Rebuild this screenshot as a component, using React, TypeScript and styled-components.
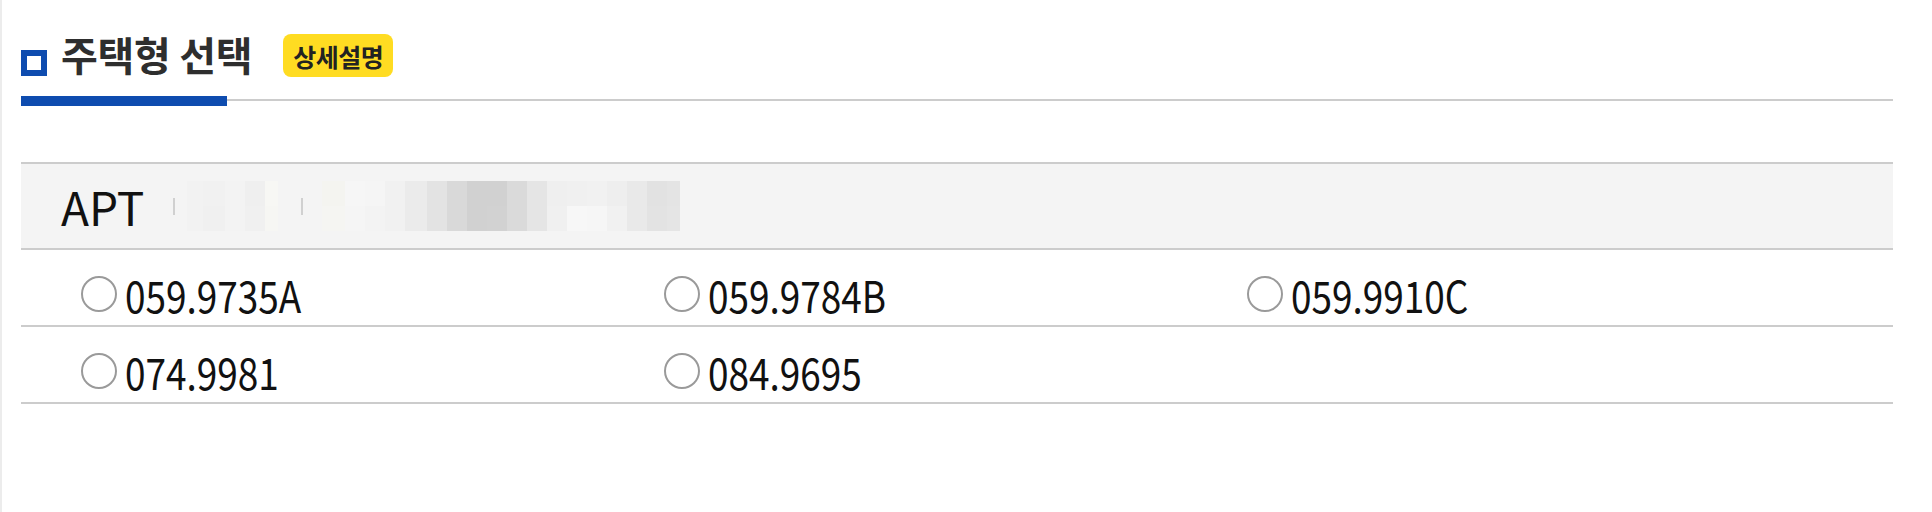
import { createGlobalStyle } from "styled-components";
import styled from "styled-components";

const GlobalStyle = createGlobalStyle`
  html, body {
    margin: 0;
    padding: 0;
    background: #fff;
  }
  body {
    font-family: "Noto Sans CJK KR", "Noto Sans", sans-serif;
  }
`;

const Page = styled.div`
  min-height: 512px;
  border-left: 2px solid #ececec;
  padding: 0 39px 0 19px;
  box-sizing: border-box;
`;

const Heading = styled.div`
  position: relative;
  display: flex;
  align-items: flex-start;
  height: 69px;
  padding-top: 30px;
  border-bottom: 2px solid #cccccc;

  &::after {
    content: "";
    position: absolute;
    left: 0;
    bottom: -7px;
    width: 206px;
    height: 10px;
    background: #0e4caf;
  }
`;

const Square = styled.span`
  flex-shrink: 0;
  width: 14px;
  height: 14px;
  border: 6px solid #0e4caf;
  margin-top: 20px;
  background: #fff;
`;

const Title = styled.h2`
  margin: 0 0 0 14px;
  font-family: "Noto Sans CJK KR", sans-serif;
  font-size: 40px;
  line-height: 48px;
  font-weight: 700;
  color: #2e2e2e;
  letter-spacing: -0.3px;
`;

const Badge = styled.span`
  flex-shrink: 0;
  margin: 4px 0 0 31px;
  width: 110px;
  height: 43px;
  display: inline-flex;
  align-items: center;
  justify-content: center;
  border-radius: 8px;
  background: #ffdc22;
  font-family: "Noto Sans CJK KR", sans-serif;
  font-size: 25px;
  font-weight: 700;
  color: #222;
  letter-spacing: -0.5px;
`;

const Table = styled.div`
  margin-top: 61px;
  border-top: 2px solid #cccccc;
`;

const TypeHeader = styled.div`
  display: flex;
  align-items: center;
  height: 84px;
  padding-left: 40px;
  background: #f4f4f4;
  border-bottom: 2px solid #cccccc;
`;

const TypeName = styled.span`
  font-family: "Noto Sans CJK KR", sans-serif;
  font-size: 46px;
  line-height: 1;
  color: #111;
`;

const Divider = styled.span<{ $lead: number; $gap: number }>`
  flex-shrink: 0;
  width: 2px;
  height: 17px;
  background: #d0d0d0;
  margin: 0 ${(p) => p.$gap}px 0 ${(p) => p.$lead}px;
`;

const Mosaic = styled.div<{ $rows: number }>`
  display: grid;
  grid-auto-flow: column;
  grid-template-rows: repeat(${(p) => p.$rows}, 25px);
`;

const Cell = styled.span<{ $tone: string; $w: number }>`
  width: ${(p) => p.$w}px;
  background: ${(p) => p.$tone};
`;

const OptionRow = styled.div`
  display: grid;
  grid-template-columns: repeat(3, 583px);
  align-items: center;
  height: 77px;
  padding-left: 60px;
  padding-top: 12px;
  border-bottom: 2px solid #cccccc;
  box-sizing: border-box;
`;

const Option = styled.label`
  display: flex;
  align-items: center;
  gap: 8px;
  cursor: pointer;
`;

const Radio = styled.input`
  flex-shrink: 0;
  appearance: none;
  margin: 0;
  width: 36px;
  height: 36px;
  border-radius: 50%;
  border: 2px solid #9a9a9a;
  background: #fff;
  box-sizing: border-box;
`;

const OptionText = styled.span`
  display: inline-block;
  font-family: "Noto Sans CJK KR", sans-serif;
  font-size: 44px;
  line-height: 1;
  color: #111;
  transform: scaleX(0.84);
  transform-origin: left center;
`;

const mosaicA = [
  ["#f2f2f2", "#f2f2f2", 16],
  ["#f1f1f1", "#f0f0f0", 22],
  ["#f3f3f3", "#f3f3f3", 20],
  ["#efefef", "#f0f0f0", 20],
  ["#f7f7f4", "#f6f6f3", 13],
] as const;

const mosaicB = [
  ["#f4f4f0", "#f5f5f2", 23],
  ["#f6f6f6", "#f5f5f5", 20],
  ["#f5f5f5", "#f3f3f3", 20],
  ["#f1f1f1", "#f1f1f1", 20],
  ["#ebebeb", "#ebebeb", 22],
  ["#e3e3e3", "#e3e3e3", 20],
  ["#d9d9d9", "#d9d9d9", 20],
  ["#d1d1d1", "#d1d1d1", 20],
  ["#d1d1d1", "#d2d2d2", 20],
  ["#dadada", "#dadada", 20],
  ["#e5e5e5", "#e5e5e5", 20],
  ["#efefef", "#f0f0f0", 20],
  ["#f0f0f0", "#f7f7f7", 20],
  ["#f1f1f1", "#f6f6f6", 20],
  ["#eeeeee", "#f1f1f1", 20],
  ["#e9e9e9", "#e9e9e9", 20],
  ["#e2e2e2", "#e3e3e3", 20],
  ["#e4e4e4", "#e5e5e5", 13],
] as const;

const rows = [
  ["059.9735A", "059.9784B", "059.9910C"],
  ["074.9981", "084.9695"],
];

function Blur({ cells }: { cells: readonly (readonly [string, string, number])[] }) {
  return (
    <Mosaic $rows={2}>
      {cells.map(([top, bottom, w], i) => [
        <Cell key={`t${i}`} $tone={top} $w={w} />,
        <Cell key={`b${i}`} $tone={bottom} $w={w} />,
      ])}
    </Mosaic>
  );
}

export default function App() {
  return (
    <>
      <GlobalStyle />
      <Page>
        <Heading>
          <Square />
          <Title>주택형 선택</Title>
          <Badge>상세설명</Badge>
        </Heading>
        <Table>
          <TypeHeader>
            <TypeName>APT</TypeName>
            <Divider $lead={29} $gap={12} />
            <Blur cells={mosaicA} />
            <Divider $lead={23} $gap={19} />
            <Blur cells={mosaicB} />
          </TypeHeader>
          {rows.map((row, r) => (
            <OptionRow key={r}>
              {row.map((v) => (
                <Option key={v}>
                  <Radio type="radio" name="housing-type" value={v} />
                  <OptionText>{v}</OptionText>
                </Option>
              ))}
            </OptionRow>
          ))}
        </Table>
      </Page>
    </>
  );
}
